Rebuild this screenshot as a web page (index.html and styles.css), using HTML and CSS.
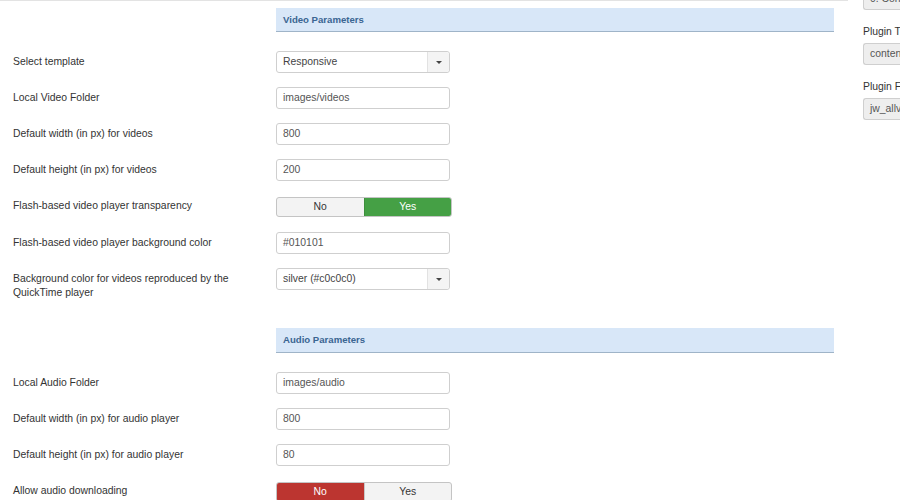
FILE: index.html
```html
<!DOCTYPE html>
<html>
<head>
<meta charset="utf-8">
<link rel="stylesheet" href="styles.css">
</head>
<body>
<div class="page">
  <div class="main">
    <section class="group">
      <div class="row head-row"><div class="label"></div><h3 class="legend">Video Parameters</h3></div>
      <div class="row"><div class="label">Select template</div>
        <div class="select"><span class="sel-val">Responsive</span><span class="sel-arrow"><i class="caret"></i></span></div></div>
      <div class="row"><div class="label">Local Video Folder</div><div class="input">images/videos</div></div>
      <div class="row"><div class="label">Default width (in px) for videos</div><div class="input">800</div></div>
      <div class="row"><div class="label">Default height (in px) for videos</div><div class="input">200</div></div>
      <div class="row"><div class="label">Flash-based video player transparency</div>
        <div class="toggle"><span class="opt">No</span><span class="opt yes-on">Yes</span></div></div>
      <div class="row"><div class="label">Flash-based video player background color</div><div class="input">#010101</div></div>
      <div class="row"><div class="label">Background color for videos reproduced by the QuickTime player</div>
        <div class="select"><span class="sel-val">silver (#c0c0c0)</span><span class="sel-arrow"><i class="caret"></i></span></div></div>
    </section>
    <section class="group audio">
      <div class="row head-row"><div class="label"></div><h3 class="legend">Audio Parameters</h3></div>
      <div class="row"><div class="label">Local Audio Folder</div><div class="input">images/audio</div></div>
      <div class="row"><div class="label">Default width (in px) for audio player</div><div class="input">800</div></div>
      <div class="row"><div class="label">Default height (in px) for audio player</div><div class="input">80</div></div>
      <div class="row"><div class="label">Allow audio downloading</div>
        <div class="toggle"><span class="opt no-on">No</span><span class="opt">Yes</span></div></div>
    </section>
  </div>
  <aside class="side">
    <div class="input ro first">0. Content</div>
    <div class="side-label">Plugin Type</div>
    <div class="input ro">content</div>
    <div class="side-label">Plugin File</div>
    <div class="input ro">jw_allvideos</div>
  </aside>
</div>
</body>
</html>
```
FILE: styles.css
```css
html, body { margin: 0; padding: 0; background: #fff; }
body {
  font-family: "Liberation Sans", Arial, Helvetica, sans-serif;
  font-size: 10.4px;
  color: #333;
  overflow: hidden;
  height: 500px;
}
.page { display: flex; align-items: flex-start; }
.main {
  width: 848px;
  flex: none;
  border-top: 1px solid #e3e3e3;
  padding-left: 13px;
  box-sizing: border-box;
}
.group { padding-top: 7px; }
.group.audio { padding-top: 14px; }
.row {
  display: flex;
  align-items: flex-start;
  margin-bottom: 14px;
}
.head-row { margin-bottom: 19px; }
.label {
  width: 230px;
  margin-right: 33px;
  flex: none;
  line-height: 14px;
  padding-top: 4px;
}
.head-row .label { padding: 0; }
.legend {
  margin: 0;
  width: 558px;
  height: 24px;
  box-sizing: border-box;
  background: #d8e7f8;
  border-bottom: 1px solid #9fb4c8;
  color: #3a6592;
  font-size: 9.6px;
  font-weight: bold;
  line-height: 23px;
  padding-left: 7px;
}
.audio .legend { height: 25px; line-height: 24px; }
.input {
  width: 174px;
  height: 22px;
  box-sizing: border-box;
  border: 1px solid #cfcfcf;
  border-radius: 3px;
  padding: 0 6px;
  line-height: 20px;
  color: #555;
  background: #fff;
  white-space: nowrap;
  overflow: hidden;
}
.select {
  width: 174px;
  height: 22px;
  box-sizing: border-box;
  border: 1px solid #cfcfcf;
  border-radius: 3px;
  display: flex;
  color: #444;
  background: #fff;
}
.sel-val { flex: 1; padding-left: 6px; line-height: 20px; }
.sel-arrow {
  width: 21px;
  border-left: 1px solid #e2e2e2;
  background: #f4f4f4;
  border-radius: 0 3px 3px 0;
  display: flex;
  align-items: center;
  justify-content: center;
}
.caret {
  width: 0; height: 0;
  border-left: 3px solid transparent;
  border-right: 3px solid transparent;
  border-top: 3px solid #444;
}
.toggle {
  display: flex;
  width: 176px;
  height: 20px;
  margin-top: 2px;
  margin-bottom: 1px;
  box-sizing: border-box;
  border: 1px solid #c4c4c4;
  border-radius: 3px;
  overflow: hidden;
  background: #f3f3f3;
}
.opt {
  flex: 1;
  text-align: center;
  line-height: 18px;
  color: #333;
}
.opt + .opt { border-left: 1px solid #c8c8c8; }
.yes-on { background: #45a045; color: #fff; border-left-color: #3d8f3d !important; }
.no-on { background: #bc3530; color: #fff; }
.side {
  margin-left: 15px;
  flex: none;
  width: 120px;
}
.input.ro {
  background: #eeeeee;
  color: #555;
  width: 100px;
  border-radius: 3px 0 0 3px;
  border-right: none;
}
.input.first { margin-top: -12px; }
.side-label {
  margin-top: 15px;
  margin-bottom: 4px;
  line-height: 14px;
}
```
